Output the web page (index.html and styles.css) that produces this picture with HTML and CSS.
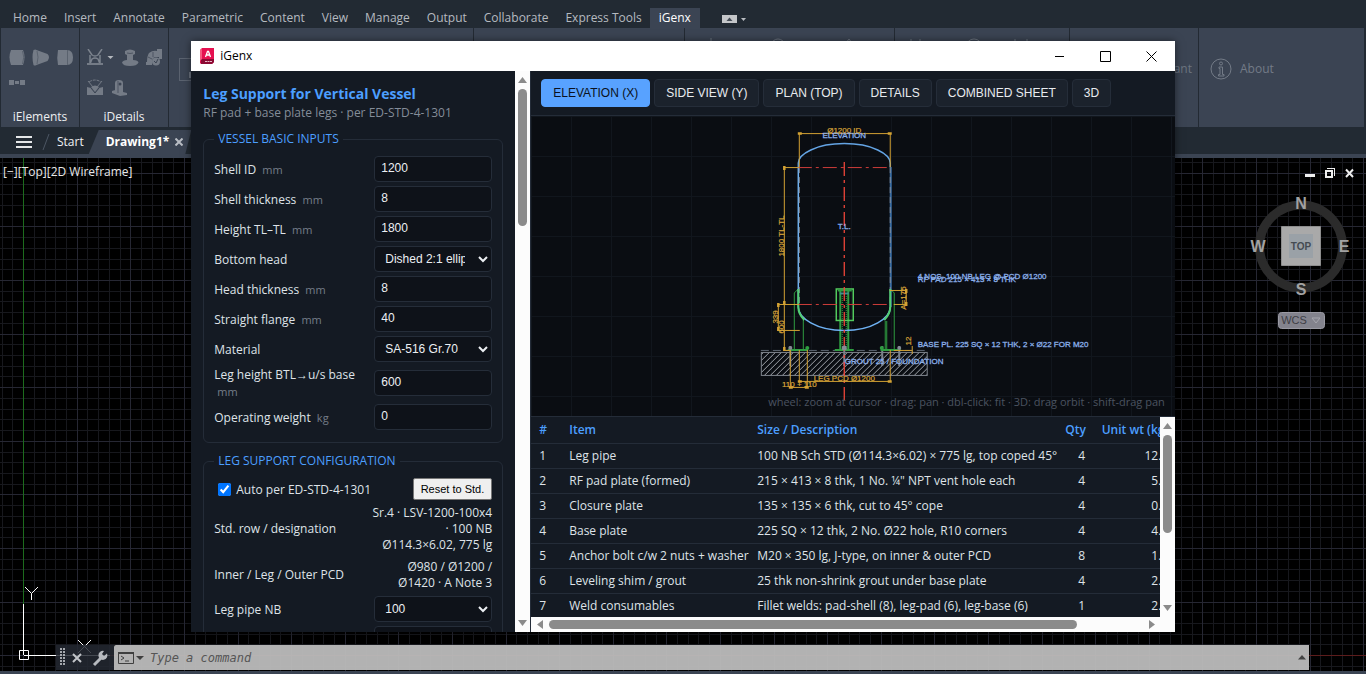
FILE: index.html
```html
<!DOCTYPE html>
<html lang="en">
<head>
<meta charset="utf-8">
<title>iGenx</title>
<link rel="stylesheet" href="styles.css">
</head>
<body>
<nav class="menu">
  <button>Home</button><button>Insert</button><button>Annotate</button><button>Parametric</button><button>Content</button><button>View</button><button>Manage</button><button>Output</button><button>Collaborate</button><button>Express Tools</button><button class="active">iGenx</button>
  <svg class="menu-extra" width="26" height="10" viewBox="0 0 26 10"><rect width="15" height="8" y="1" fill="#c4c6c9"/><path d="M4.500 7 7.500 3.500 10.500 7z" fill="#444b55"/><path d="M19 4h5l-2.500 3z" fill="#b9bdc2"/></svg>
</nav>
<section class="ribbon">
  <div class="panel p1">
    <svg width="66" height="50" viewBox="0 0 66 50" fill="#747b86">
      <path d="M2 1h12q3 7 0 15H2q-3-8 0-15z"/><path d="M13.500 2q2.500 6 0 13" fill="none" stroke="#5a626e"/>
      <path d="M24.500 1q2-1 3 0l11 4q3 3 0 7l-11 4q-2 1-3 0-2-8 0-15z"/><path d="M28 2q2 6 0 13" fill="none" stroke="#5a626e"/>
      <path d="M49 1h9q6 0 6 7.500T58 16h-9q-1.500-7 0-15z"/><path d="M58.500 1v15" stroke="#5a626e"/>
      <path d="M0 31h5v5H0zM6 32h4v3H6zM11 31h5v5h-5z"/>
    </svg>
    <span>iElements</span>
  </div>
  <div class="panel p2">
    <svg width="76" height="50" viewBox="0 0 76 50" fill="#747b86">
      <path d="M1 0l4 6q3 2 6 0l4-6M3 15l2-5q3-2 6 0l2 5M3 6v9M13 6v9" fill="none" stroke="#7b828d" stroke-width="1.500"/><path d="M0 14h16v2H0z"/>
      <path d="M20.500 7h6l-3 3z" fill="#b4b8be"/>
      <path d="M38 2q5-3 10 0v3l-2 1v5q5 0 5.500 2.500Q50 17 43 17t-8-3.500Q36 11 40 11V6l-2-1z"/><path d="M40 4q3 1 6 0" stroke="#4d5562" fill="none"/>
      <path d="M62 4q4-3 8-2V0h5v10h-3V8h-3q-4 0-4 5v3h-6v-3h1q0-6 2-9z"/><path d="M61 8l4 2M66 3v5" stroke="#4d5562"/><circle cx="69" cy="12.500" r="4"/><path d="M67 12l2 2 2-4" stroke="#3b4453" fill="none"/>
      <path d="M2 33q6-4 12 0" fill="none" stroke="#747b86" stroke-dasharray="3 1"/><path d="M0 38l4 1 4 4 4-4 4-1v8H0z"/><path d="M1 32l5 6M15 32l-5 6" stroke="#747b86"/><path d="M4 38q4-3 8 0l-4 5z"/><path d="M4 39l4 5 4-5" fill="none" stroke="#3b4453"/>
      <path d="M28 46V34q0-3 4-3t4 3v9l4 1v2l-7 1-8-3v-2l3-1z"/><circle cx="33" cy="35" r="1.500" fill="#3b4453"/><path d="M31 32v12" stroke="#4d5562"/>
    </svg>
    <span>iDetails</span>
  </div>
  <div class="panel p3"><svg width="30" height="24" viewBox="0 0 30 24"><rect x=".5" y=".5" width="28" height="22" fill="none" stroke="#5b6370"/><path d="M11 14v6" stroke="#6c7480" stroke-width="2"/></svg></div>
  <div class="panel p4"></div>
  <div class="panel p5"><svg width="170" height="20" viewBox="0 0 170 20" fill="none" stroke="#6c7480"><path d="M10 0v9"/><circle cx="77" cy="8" r="7"/><path d="M142 9l6-8 6 8z"/></svg></div>
  <div class="panel p6"><svg width="140" height="20" viewBox="0 0 140 20" fill="none" stroke="#6c7480"><path d="M1 1v9M10 1v9M105 1v9M117 1v9"/><circle cx="64" cy="9" r="8"/></svg></div>
  <div class="panel p7"><span>Assistant</span></div>
  <div class="panel p8"><svg width="22" height="22" viewBox="0 0 22 22" fill="none" stroke="#737b87"><circle cx="11" cy="11" r="10"/><circle cx="11" cy="5.500" r="1.500"/><path d="M9 9h3.500v7.500H14V18H8.500v-1.500H10v-6H9z"/></svg><span>About</span></div>
</section>
<div class="docs">
  <button class="burger" aria-label="Menu"><i></i><i></i><i></i></button>
  <svg width="8" height="18" viewBox="0 0 8 18"><path d="M1 17 7 1" stroke="#4c5663" fill="none"/></svg>
  <button class="start">Start</button>
  <button class="doc">Drawing1* <svg width="8" height="8" viewBox="0 0 8 8"><path d="M.5.500l7 7m0-7l-7 7" stroke="#b9bdc4" stroke-width="2"/></svg></button>
</div>
<main class="space">
  <svg class="grid" id="grid"></svg>
  <div class="view-label">[−][Top][2D Wireframe]</div>
  <svg class="ucs" width="110" height="90" viewBox="0 0 110 90" fill="none" stroke="#fff"><path d="M23.500 24v51M19.500 70.500h9v9h-9zM24 75.500h86M25 7l6.500 6.500L38 7m-6.500 6.500V20M78 60l13 13m0-13L78 73"/></svg>
  <svg class="cube" width="116" height="170" viewBox="1250 160 116 170" font-family="Liberation Sans, sans-serif" font-weight="bold" text-anchor="middle">
    <g fill="#eee"><path d="M1305 174h10v3h-10z"/><path d="M1325 170h8v8h-8zm2 2v4h4v-4zM1327 168h8v8h-1v-7h-7z" fill-rule="evenodd"/></g>
    <path d="M1346 169.500l7 7.500m0-7.500l-7 7.500" stroke="#eee" stroke-width="2"/>
    <circle cx="1301" cy="246.500" r="41.500" fill="none" stroke="#2b2b2b" stroke-width="9"/>
    <path d="M1281.500 226.500h39v39h-39z" fill="#a9a9a9" stroke="#8d8d8d"/><path d="M1289 234h24v24h-24z" fill="#9aa1a7"/>
    <text x="1301" y="250" font-size="10" fill="#454b52">TOP</text>
    <g font-size="16" fill="#a2a2a2"><text x="1301" y="209">N</text><text x="1301" y="295">S</text><text x="1258" y="252">W</text><text x="1344" y="252">E</text></g>
    <rect x="1278.500" y="312.500" width="46" height="16" rx="3" fill="#83838d" stroke="#9a9aa3"/>
    <text x="1294" y="324" font-size="11" font-weight="normal" fill="#3e3e45">WCS</text><path d="M1312 318h8l-4 5z" fill="none" stroke="#a6a6ae"/>
  </svg>
  <div class="command">
    <div class="tools">
      <svg width="58" height="25" viewBox="0 0 58 25"><path d="M5 3v18M8 3v18" stroke="#a5a8ad" stroke-width="2" stroke-dasharray="2 1"/><path d="M17 9l8 8m0-8l-8 8" stroke="#c2c4c8" stroke-width="2"/><path d="M38 20l8-8" stroke="#b7babf" stroke-width="3"/><path d="M51 8.500a4.500 4.500 0 1 1-3-2.500l-2 3 2 2z" fill="#b7babf"/></svg>
    </div>
    <label class="prompt"><svg width="26" height="14" viewBox="0 0 26 14" fill="none" stroke="#3f3f3f"><path d="M.5 1.500h15v11H.5z"/><path d="M0 2h16" stroke-width="2"/><path d="M3 5l3 2-3 2M7 10h4"/><path d="M18 5h8l-4 4z" fill="#3f3f3f" stroke="none"/></svg><input placeholder="Type a command" aria-label="Command"><svg width="8" height="5" viewBox="0 0 8 5"><path d="M0 4.500 4 0l4 4.500z" fill="#444"/></svg></label>
  </div>
</main>
<footer></footer>

<div class="window" role="dialog" aria-label="iGenx">
  <header class="titlebar">
    <svg width="14" height="16" viewBox="0 0 14 16"><path d="M0 2l2-2h12v14l-2 2H1l-1-1z" fill="#e51050"/><path d="M1 11h13v3l-2 2H1z" fill="#8c0a33"/><path d="M0 2l2-1v10l-2 2z" fill="#f4587f"/><path d="M5.500 9 7.500 3.500h1L10.500 9M6.500 7h3" fill="none" stroke="#fff" stroke-width="1.300"/><path d="M5 13.500h7" stroke="#e8b8c6" stroke-dasharray="2 .5"/></svg>
    <h1>iGenx</h1>
    <button aria-label="Minimize"><svg width="11" height="11" viewBox="0 0 11 11"><path d="M1 5.500h9"/></svg></button>
    <button aria-label="Maximize"><svg width="11" height="11" viewBox="0 0 11 11"><path d="M.5.500h10v10H.5z"/></svg></button>
    <button aria-label="Close"><svg width="11" height="11" viewBox="0 0 11 11"><path d="M.5.500l10 10m0-10l-10 10"/></svg></button>
  </header>
  <div class="content">
    <form class="side">
      <h2>Leg Support for Vertical Vessel</h2>
      <p>RF pad + base plate legs · per ED-STD-4-1301</p>
      <fieldset><legend>VESSEL BASIC INPUTS</legend>
        <div class="row"><label for="a1">Shell ID <small>mm</small></label><input id="a1" value="1200"></div>
        <div class="row"><label for="a2">Shell thickness <small>mm</small></label><input id="a2" value="8"></div>
        <div class="row"><label for="a3">Height TL–TL <small>mm</small></label><input id="a3" value="1800"></div>
        <div class="row"><label for="a4">Bottom head</label><select id="a4"><option>Dished 2:1 ellipsoidal</option></select></div>
        <div class="row"><label for="a5">Head thickness <small>mm</small></label><input id="a5" value="8"></div>
        <div class="row"><label for="a6">Straight flange <small>mm</small></label><input id="a6" value="40"></div>
        <div class="row"><label for="a7">Material</label><select id="a7"><option>SA-516 Gr.70</option></select></div>
        <div class="row"><label for="a8">Leg height BTL→u/s base <small>mm</small></label><input id="a8" value="600"></div>
        <div class="row"><label for="a9">Operating weight <small>kg</small></label><input id="a9" value="0"></div>
      </fieldset>
      <fieldset><legend>LEG SUPPORT CONFIGURATION</legend>
        <div class="row auto"><label><input type="checkbox" checked> Auto per ED-STD-4-1301</label><button type="button">Reset to Std.</button></div>
        <div class="row"><span>Std. row / designation</span><output>Sr.4 · LSV-1200-100x4 · 100 NB Ø114.3×6.02, 775 lg</output></div>
        <div class="row"><span>Inner / Leg / Outer PCD</span><output>Ø980 / Ø1200 / Ø1420 · A Note 3</output></div>
        <div class="row"><label for="b1">Leg pipe NB</label><select id="b1"><option>100</option></select></div>
        <div class="row"><label for="b2"></label><input id="b2"></div>
      </fieldset>
    </form>
    <div class="bar vertical side-bar"><svg width="9" height="6" viewBox="0 0 9 6"><path d="M0 6 4.500 0 9 6z"/></svg><div class="track"><i></i></div><svg width="9" height="6" viewBox="0 0 9 6"><path d="M0 0h9L4.500 6z"/></svg></div>
    <div class="right">
      <div class="views"><button class="on">ELEVATION (X)</button><button>SIDE VIEW (Y)</button><button>PLAN (TOP)</button><button>DETAILS</button><button>COMBINED SHEET</button><button>3D</button></div>
      <div class="drawing">
        <svg viewBox="531 116 644 300" fill="none" font-family="Liberation Sans, sans-serif" font-size="8">
          <defs><pattern id="hatch" width="6" height="6" patternUnits="userSpaceOnUse"><path d="M-1 7 7-1M-1 1 1-1M5 7l2-2" stroke="#a4a8ae"/></pattern></defs>
          <rect x="761.500" y="352.500" width="166" height="23" fill="url(#hatch)" stroke="#7e848c"/>
          <path d="M761 350.500h167" stroke="#5d6570" stroke-dasharray="8 4"/>
          <g stroke="#7b828b"><path d="M790.500 346v20M844.500 346v20M882.500 346v20M899.500 346v20" stroke-width="2"/></g>
          <g stroke="#2f9e41"><path d="M794.500 350v-57l4-4M803.500 350v-30M885.500 350v-29M894.500 350v-57l-4-4M887 350v-29"/><path d="M788 350h20M881 350h20M835 350h19" stroke-width="2"/><path d="M840.500 291v59M848.500 291v59" stroke-width="2"/><path d="M842.500 296v54M846.500 296v54" stroke-dasharray="1 1"/></g>
          <path d="M798.500 167v140c0 11 18 23.500 46 23.500s46-12.500 46-23.500" stroke="#6eb1f2" stroke-width="1.500"/>
          <path d="M798.500 167v-4c0-9 18-19.500 46-19.500s46 10.500 46 19.500v4" stroke="#64a4e4" stroke-width="1.500"/>
          <path d="M891 167v140" stroke="#3a6da4" stroke-width="2"/>
          <path d="M799.500 167v140M890.500 167v140" stroke="#858c96" stroke-dasharray="6 4"/>
          <path d="M798.500 289v18c0 6 2 9 6 13M890.500 289v18c0 6-2 9-6 13" stroke="#53cf72" stroke-width="2"/>
          <rect x="836.500" y="289" width="17" height="31.500" stroke="#52cb5d" stroke-width="1.500"/>
          <path d="M838 290.500h14" stroke="#2f9e41" stroke-width="2"/><path d="M840 293.500h9" stroke="#3d938d" stroke-width="2"/>
          <path d="M798 167.500h93M798 304.500h93" stroke="#cf3d3a" stroke-dasharray="14 4 3 4"/>
          <path d="M844.500 162v238" stroke="#ee4539" stroke-width="1.300" stroke-dasharray="14 4 3 4"/>
          <g fill="#858b94"><circle cx="790.500" cy="348" r="2"/><circle cx="844.500" cy="348" r="2.500"/><circle cx="899.500" cy="348" r="2"/></g>
          <g fill="#2f9e41"><circle cx="807.500" cy="348" r="2"/><circle cx="882" cy="348" r="2"/></g>
          <g stroke="#d3a233">
            <path d="M799.500 167v-33.500h91V167M799 167.500h-14.500v183h6M799 304.500h-20.500v26H800M890 290.500h16.500v14H894M894 350.500h18M912.500 346v8M799.500 350v31.500h91V350M790.500 350v37.500h17V350"/>
            <path d="M798 133.500h4M888 133.500h4M784.500 166v4M784.500 301v4M784.500 347v4M778.500 303v4M778.500 327v4M906.500 289v4M906.500 302v4M798 381.500h4M888 381.500h4M789 387.500h4M805 387.500h4" stroke-width="2.500"/>
          </g>
          <g fill="#dba73a" stroke="#dba73a" stroke-width=".2" text-anchor="middle"><text x="844.500" y="133">Ø1200 ID</text><text x="844.500" y="381">LEG PCD Ø1200</text><text x="799.500" y="387">110 + 110</text>
            <text transform="translate(784 236) rotate(-90)">1800 TL-TL</text><text transform="translate(778 317) rotate(-90)">339</text><text transform="translate(784 327) rotate(-90)">600</text><text transform="translate(906 298) rotate(-90)">A=175</text><text transform="translate(911 341) rotate(-90)">12</text></g>
          <g fill="#8bb0ea" stroke="#8bb0ea" stroke-width=".3"><text x="844.500" y="138" text-anchor="middle">ELEVATION</text><text x="844.500" y="229" text-anchor="middle">T.L.</text><text x="918" y="279">4 NOS. 100 NB LEG @ PCD Ø1200</text><text x="918" y="282">RF PAD 215 × 413 × 8 THK</text><text x="918" y="347">BASE PL. 225 SQ × 12 THK, 2 × Ø22 FOR M20</text><text x="845" y="364">GROUT 25 / FOUNDATION</text></g>
        </svg>
        <span class="hint">wheel: zoom at cursor · drag: pan · dbl-click: fit · 3D: drag orbit · shift-drag pan</span>
      </div>
      <div class="bom">
        <div class="scroller"><table>
          <colgroup><col class="c1"><col class="c2"><col class="c3"><col class="c4"><col class="c5"></colgroup>
          <thead><tr><th>#</th><th>Item</th><th>Size / Description</th><th class="n">Qty</th><th class="n">Unit wt (kg)</th></tr></thead>
          <tbody>
          <tr><td>1</td><td>Leg pipe</td><td>100 NB Sch STD (Ø114.3×6.02) × 775 lg, top coped 45°</td><td class="n">4</td><td class="n">12.5</td></tr>
          <tr><td>2</td><td>RF pad plate (formed)</td><td>215 × 413 × 8 thk, 1 No. ¼" NPT vent hole each</td><td class="n">4</td><td class="n">5.6</td></tr>
          <tr><td>3</td><td>Closure plate</td><td>135 × 135 × 6 thk, cut to 45° cope</td><td class="n">4</td><td class="n">0.7</td></tr>
          <tr><td>4</td><td>Base plate</td><td>225 SQ × 12 thk, 2 No. Ø22 hole, R10 corners</td><td class="n">4</td><td class="n">4.8</td></tr>
          <tr><td>5</td><td>Anchor bolt c/w 2 nuts + washer</td><td>M20 × 350 lg, J-type, on inner &amp; outer PCD</td><td class="n">8</td><td class="n">1.7</td></tr>
          <tr><td>6</td><td>Leveling shim / grout</td><td>25 thk non-shrink grout under base plate</td><td class="n">4</td><td class="n">2.8</td></tr>
          <tr><td>7</td><td>Weld consumables</td><td>Fillet welds: pad-shell (8), leg-pad (6), leg-base (6)</td><td class="n">1</td><td class="n">2.2</td></tr>
          </tbody></table></div>
        <div class="bar vertical bom-bar"><svg width="9" height="6" viewBox="0 0 9 6"><path d="M0 6 4.500 0 9 6z"/></svg><div class="track"><i></i></div><svg width="9" height="6" viewBox="0 0 9 6"><path d="M0 0h9L4.500 6z"/></svg></div>
      </div>
      <div class="bar horizontal"><svg width="6" height="9" viewBox="0 0 6 9"><path d="M6 0v9L0 4.500z"/></svg><div class="track"><i></i></div><svg width="6" height="9" viewBox="0 0 6 9"><path d="M0 0v9l6-4.500z"/></svg></div>
    </div>
  </div>
</div>
<script src="grid.js"></script>
</body>
</html>
```
FILE: styles.css
```css
* { box-sizing: border-box; }
body { margin: 0; height: 100vh; display: flex; flex-direction: column; overflow: hidden; position: relative; background: #222a33; color: #dfe3e8; font: 12px/16px "Open Sans", "Noto Sans", sans-serif; }
button { font: inherit; color: inherit; border: 0; background: none; padding: 0; }
svg { flex: none; display: block; }

.menu { height: 28px; padding-top: 8px; display: flex; padding-left: 4px; }
.menu button { padding: 0 8px 0 9px; height: 20px; color: #b6bac0; white-space: nowrap; }
.menu .active { background: #3b4453; color: #fff; padding: 0 9px; }
.menu-extra { margin: 6px 0 0 22px; }

.ribbon { height: 99px; margin: 0 2px 0 1px; background: #3b4453; display: flex; }
.panel { border-right: 1px solid #232a33; display: flex; }
.p1, .p2 { flex-direction: column; justify-content: space-between; align-items: center; padding: 21px 0 2px; color: #eceef0; }
.p1 { width: 79px; }
.p1 svg { margin-left: 3px; }
.p2 { width: 89px; }
.p2 svg { margin-left: 2px; }
.p3 { width: 305px; padding: 30px 0 0 10px; }
.p4 { width: 211px; }
.p5 { width: 210px; padding: 10px 0 0 16px; }
.p6 { width: 175px; padding: 10px 0 0 15px; }
.p7 { width: 129px; justify-content: flex-end; align-items: flex-start; padding: 33px 6px 0 0; color: #6c7480; }
.p8 { flex: 1; border: 0; gap: 8px; padding: 30px 0 0 11px; color: #737b87; }
.p8 span { padding-top: 3px; }

.docs { height: 31px; border-bottom: 4px solid #3b4453; display: flex; align-items: center; padding: 3px 0 0 16px; }
.burger { width: 16px; display: flex; flex-direction: column; gap: 3px; }
.burger i { height: 2px; background: #e4e6e8; }
.docs > svg { margin-left: 10px; }
.start { margin-left: 7px; color: #f0f1f3; }
.doc { margin-left: 5px; height: 24px; padding: 0 8px 0 17px; background: #3b4453; color: #fff; font-weight: bold; display: flex; align-items: center; gap: 6px; clip-path: polygon(10px 0, 100% 0, calc(100% - 6px) 100%, 0 100%); }

.space { flex: 1; position: relative; overflow: hidden; background: #000; }
.grid { position: absolute; inset: 0; width: 100%; height: 100%; }
.view-label { position: absolute; left: 3px; top: 6px; color: #e8e8e8; }
.ucs { position: absolute; left: 0; bottom: 1px; }
.cube { position: absolute; right: 0; top: 2px; }
.command { position: absolute; left: 56px; right: 57px; bottom: 1px; height: 25px; display: flex; }
.tools { width: 58px; background: rgba(36, 41, 50, .85); }
.prompt { flex: 1; display: flex; align-items: center; gap: 6px; padding: 0 3px 0 4px; background: rgba(188, 188, 188, .95); border-radius: 2px 0 0 0; }
.prompt input { flex: 1; border: 0; background: none; padding: 0; font: italic 12px "DejaVu Sans Mono", monospace; }
.prompt input::placeholder { color: #555; }
footer { height: 3px; background: #3b4453; }

.window { position: absolute; left: 14%; right: 14%; top: 41px; bottom: 42px; display: flex; flex-direction: column; background: #141a23; box-shadow: 0 0 8px rgba(0, 0, 0, .5); }
.titlebar { height: 30px; background: #fff; color: #000; display: flex; align-items: center; padding-left: 9px; }
.titlebar h1 { flex: 1; margin: 0 0 0 6px; font: inherit; }
.titlebar button { width: 46px; height: 30px; display: grid; place-items: center; }
.titlebar button svg { fill: none; stroke: #000; }
.content { flex: 1; min-height: 0; display: flex; }

.side { width: 324px; padding: 14px 12px 0; overflow: hidden; }
.side h2 { margin: 0; font-size: 14px; line-height: 18px; font-weight: bold; color: #4c9fff; }
.side p { margin: 0; line-height: 20px; color: #848d99; }
fieldset { margin: 8px 0 10px; border: 1px solid #242c38; border-radius: 6px; padding: 9px 10px 12px; display: flex; flex-direction: column; gap: 4px; min-width: 0; }
legend { padding: 0 4px; color: #4c9fff; }
.row { display: grid; grid-template-columns: 1fr 118px; gap: 10px; align-items: center; }
.row label { line-height: 17px; }
.row small { font-size: 11px; color: #747d89; margin-left: 3px; }
.row input:not([type]), .row select { width: 100%; height: 26px; border: 1px solid #252d39; border-radius: 4px; background: #0e1219; color: #eceff3; font: 12px "Liberation Sans", sans-serif; padding: 0 6px; }
.row select { padding-right: 10px; }
.row input:not([type]) { padding-bottom: 2px; }
.row output { text-align: right; padding: 1px 0; margin-left: -4px; }
.row.auto { grid-template-columns: 1fr auto; }
.auto label { display: flex; align-items: center; gap: 5px; }
.auto input { margin: 0 0 0 4px; width: 13px; height: 13px; }
.auto button { background: #efefef; border: 1px solid #767676; border-radius: 2px; color: #000; font: 11px "Liberation Sans", sans-serif; height: 22px; padding: 0 7px; }

.bar { background: #fcfcfc; display: flex; align-items: center; fill: #8b8b8b; }
.bar i { display: block; background: #8b8b8b; border-radius: 5px; }
.track { flex: 1; min-height: 0; }
.vertical { width: 15px; flex-direction: column; padding: 6px 0; gap: 6px; }
.vertical i { width: 9px; }
.side-bar i { height: 26%; }
.bom-bar i { height: 60%; }
.horizontal { height: 15px; padding: 0 20px 0 6px; gap: 6px; }
.horizontal i { height: 9px; width: 89%; }

.right { flex: 1; min-width: 0; display: flex; flex-direction: column; border-left: 1px solid #242c38; }
.views { height: 45px; display: flex; gap: 4px; padding: 8px 10px; border-bottom: 1px solid #242c38; }
.views button { height: 28px; border: 1px solid #252d39; border-radius: 4px; background: #1b222c; color: #e8ebef; padding: 0 11px; white-space: nowrap; font: 12px "Liberation Sans", sans-serif; }
.views .on { background: #58a2ff; border-color: #58a2ff; color: #0b1220; }
.drawing { flex: 1; min-height: 0; position: relative; background: linear-gradient(#11161d 1px, transparent 1px) 0 0 / 40px 40px, linear-gradient(90deg, #11161d 1px, transparent 1px) 0 0 / 40px 40px, #0a0d12; }
.drawing svg { width: 100%; height: 100%; }
.hint { position: absolute; right: 10px; bottom: 6px; font-size: 11px; color: #4a5360; }
.bom { height: 201px; display: flex; border-top: 1px solid #242c38; }
.scroller { flex: 1; min-width: 0; overflow: hidden; }
table { table-layout: fixed; width: 645px; border-collapse: collapse; white-space: nowrap; }
.c1 { width: 30px; } .c2 { width: 188px; } .c3 { width: 308px; } .c4 { width: 36px; } .c5 { width: 83px; }
th, td { height: 25px; padding: 0 8px; text-align: left; border-bottom: 1px solid #242c38; }
th { height: 26px; color: #4c9fff; font-weight: 600; }
.n { text-align: right; }
```
FILE: grid.js
```js
const svg = document.getElementById("grid");
const step = 10.72;

function line(x1, y1, x2, y2, color) {
  const el = document.createElementNS("http://www.w3.org/2000/svg", "path");
  el.setAttribute("d", `M${x1} ${y1}L${x2} ${y2}`);
  el.setAttribute("stroke", color);
  svg.append(el);
}

function draw() {
  svg.replaceChildren();
  const w = svg.clientWidth, h = svg.clientHeight;
  const lines = [];
  for (let i = -2; 23 + i * step < w; i++) {
    const x = Math.floor(23.6 + i * step) + 0.5;
    lines.push([i % 5 === 0, x, 0, x, h]);
  }
  for (let i = -1; 15 + i * step < h; i++) {
    const y = Math.floor(15.3 + i * step) + 0.5;
    lines.push([i % 5 === 0, 0, y, w, y]);
  }
  lines.sort((a, b) => a[0] - b[0]);
  for (const [major, ...p] of lines) line(...p, major ? "#262733" : "#17181d");
  line(23.5, 0, 23.5, h - 66, "#1d6b1d");
  line(110, h - 15.5, w, h - 15.5, "#5c1c1c");
}

draw();
addEventListener("resize", draw);
```
